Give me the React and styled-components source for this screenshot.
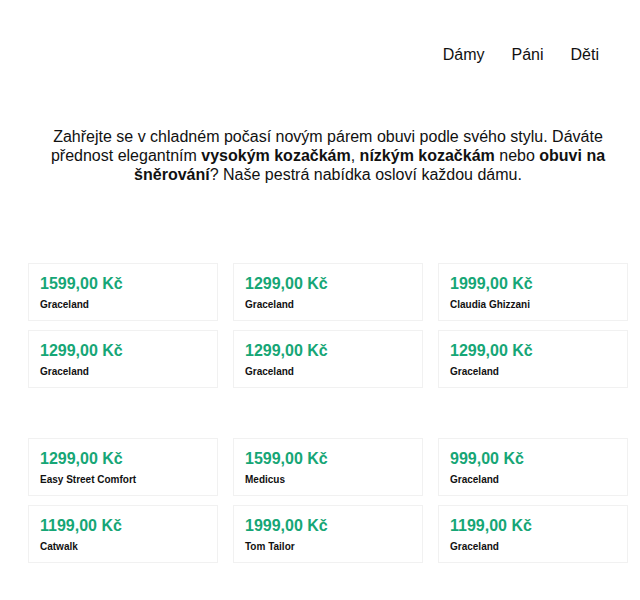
import React from "react";
import styled, { createGlobalStyle } from "styled-components";

const GlobalStyle = createGlobalStyle`
  html, body {
    margin: 0;
    padding: 0;
    background: #ffffff;
  }
  body {
    font-family: "Liberation Sans", Arial, sans-serif;
    color: #111111;
  }
`;

const Page = styled.div`
  width: 600px;
  padding: 0 12px 0 28px;
`;

const Header = styled.header`
  display: flex;
  justify-content: flex-end;
  padding: 46px 29px 0 0;
  height: 81px;
  box-sizing: border-box;
`;

const Nav = styled.nav`
  display: flex;
  gap: 27px;
`;

const NavLink = styled.a`
  font-size: 16px;
  line-height: 18px;
  color: #111111;
  text-decoration: none;
`;

const Intro = styled.p`
  margin: 46px 0 0;
  padding: 0 4px;
  font-size: 16px;
  line-height: 19px;
  text-align: center;
  color: #111111;

  strong {
    font-weight: 700;
  }
`;

const Group = styled.section`
  display: grid;
  grid-template-columns: repeat(3, 1fr);
  column-gap: 15px;
  row-gap: 9px;
  margin-top: ${(p) => p.$top}px;
`;

const Card = styled.article`
  border: 1px solid #f1f1f1;
  padding: 11px 11px 10px;
  height: 58px;
  box-sizing: border-box;
`;

const Price = styled.div`
  font-size: 16px;
  line-height: 18px;
  font-weight: 700;
  color: #16a676;
`;

const Brand = styled.div`
  margin-top: 6px;
  font-size: 10px;
  line-height: 11px;
  font-weight: 700;
  color: #111111;
`;

const groups = [
  [
    ["1599,00 Kč", "Graceland"],
    ["1299,00 Kč", "Graceland"],
    ["1999,00 Kč", "Claudia Ghizzani"],
    ["1299,00 Kč", "Graceland"],
    ["1299,00 Kč", "Graceland"],
    ["1299,00 Kč", "Graceland"],
  ],
  [
    ["1299,00 Kč", "Easy Street Comfort"],
    ["1599,00 Kč", "Medicus"],
    ["999,00 Kč", "Graceland"],
    ["1199,00 Kč", "Catwalk"],
    ["1999,00 Kč", "Tom Tailor"],
    ["1199,00 Kč", "Graceland"],
  ],
];

export default function App() {
  return (
    <>
      <GlobalStyle />
      <Page>
        <Header>
          <Nav>
            <NavLink href="#">Dámy</NavLink>
            <NavLink href="#">Páni</NavLink>
            <NavLink href="#">Děti</NavLink>
          </Nav>
        </Header>
        <Intro>
          Zahřejte se v chladném počasí novým párem obuvi podle svého stylu.
          Dáváte přednost elegantním <strong>vysokým kozačkám</strong>,{" "}
          <strong>nízkým kozačkám</strong> nebo <strong>obuvi na šněrování</strong>?
          Naše pestrá nabídka osloví každou dámu.
        </Intro>
        {groups.map((items, gi) => (
          <Group key={gi} $top={gi === 0 ? 79 : 50}>
            {items.map(([price, brand], i) => (
              <Card key={i}>
                <Price>{price}</Price>
                <Brand>{brand}</Brand>
              </Card>
            ))}
          </Group>
        ))}
      </Page>
    </>
  );
}
